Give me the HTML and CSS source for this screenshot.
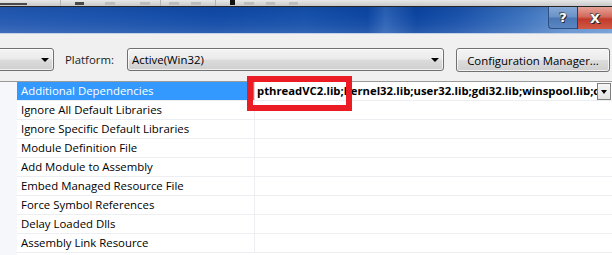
FILE: index.html
```html
<!DOCTYPE html>
<html>
<head>
<meta charset="utf-8">
<link rel="stylesheet" href="styles.css">
</head>
<body>
<div class="window">
  <div class="topstrip">
    <span class="tb-icon dark i0"></span>
    <span class="tb-sep s1"></span>
    <span class="tb-icon dark i1"></span>
    <span class="tb-icon faint i2"></span>
    <span class="tb-icon faint i3"></span>
    <span class="tb-sep s2"></span>
    <span class="tb-icon faint i4"></span>
    <span class="tb-icon faint i5"></span>
    <span class="tb-sep s3"></span>
    <span class="tb-icon black i6"></span>
    <span class="tb-icon faint i7"></span>
    <span class="tb-icon faint i8"></span>
    <span class="tb-icon faint i9"></span>
  </div>
  <div class="titlebar">
    <div class="caption-btns">
      <div class="cbtn help">?</div>
      <div class="cbtn close">X</div>
    </div>
  </div>
  <div class="toolbar">
    <div class="combo combo-config"><span class="arrow"></span></div>
    <span class="plat-label">Platform:</span>
    <div class="combo combo-platform"><span class="combo-text">Active(Win32)</span><span class="arrow"></span></div>
    <div class="btn">Configuration Manager...</div>
  </div>
  <div class="grid">
    <div class="gutter"></div>
    <div class="rows">
      <div class="row selected">
        <div class="name">Additional Dependencies</div>
        <div class="value editing">
          <span class="val-text">pthreadVC2.lib;kernel32.lib;user32.lib;gdi32.lib;winspool.lib;comdlg32.lib;advapi32.lib</span>
          <span class="ddbtn"><span class="arrow small"></span></span>
        </div>
      </div>
      <div class="row"><div class="name">Ignore All Default Libraries</div><div class="value"></div></div>
      <div class="row"><div class="name">Ignore Specific Default Libraries</div><div class="value"></div></div>
      <div class="row"><div class="name">Module Definition File</div><div class="value"></div></div>
      <div class="row"><div class="name">Add Module to Assembly</div><div class="value"></div></div>
      <div class="row"><div class="name">Embed Managed Resource File</div><div class="value"></div></div>
      <div class="row"><div class="name">Force Symbol References</div><div class="value"></div></div>
      <div class="row"><div class="name">Delay Loaded Dlls</div><div class="value"></div></div>
      <div class="row"><div class="name">Assembly Link Resource</div><div class="value"></div></div>
    </div>
  </div>
  <div class="highlight-box"></div>
</div>
</body>
</html>
```

FILE: styles.css
```css
* { box-sizing: border-box; }
html, body { margin: 0; padding: 0; }
body {
  width: 612px;
  height: 255px;
  overflow: hidden;
  background: #f0f0f0;
  font-family: "Open Sans", "Segoe UI", sans-serif;
  font-size: 11.4px;
  color: #000;
}
.window {
  position: relative;
  width: 612px;
  height: 255px;
  overflow: hidden;
  display: flex;
  flex-direction: column;
}

/* top strip (remnant of the IDE toolbar) */
.topstrip {
  flex: 0 0 7px;
  background: linear-gradient(#e8e8e8, #c9c9c9);
  border-bottom: 1px solid #262626;
  display: flex;
  align-items: flex-end;
  overflow: hidden;
}
.tb-sep {
  flex: 0 0 1px;
  height: 6px;
  background: #b4b4b4;
}
.tb-icon {
  flex: 0 0 auto;
  height: 3px;
  margin-bottom: 1px;
}
.tb-icon.dark { background: #4a4a4a; }
.tb-icon.faint { background: #bdbdbd; }
.tb-icon.black { background: #111; height: 5px; }
.i0 { width: 27px; height: 2px; background: #5a5a5a; margin-right: 33px; }
.s1 { margin-right: 14px; }
.i1 { width: 9px; margin-right: 21px; }
.i2 { width: 10px; margin-right: 25px; }
.i3 { width: 10px; margin-right: 10px; }
.s2 { margin-right: 8px; }
.i4 { width: 10px; margin-right: 12px; }
.i5 { width: 10px; margin-right: 14px; }
.s3 { margin-right: 14px; }
.i6 { width: 5px; margin-right: 9px; }
.i7 { width: 10px; margin-right: 12px; }
.i8 { width: 9px; margin-right: 14px; }
.i9 { width: 9px; }

/* title bar */
.titlebar {
  flex: 0 0 27px;
  display: flex;
  justify-content: flex-end;
  align-items: flex-start;
  border-bottom: 1px solid #c4d2e8;
  background:
    linear-gradient(180deg, rgba(0,0,0,0.06) 0%, rgba(0,0,0,0) 30%, rgba(255,255,255,0.05) 70%, rgba(255,255,255,0.12) 100%),
    linear-gradient(90deg, #2358b1 0%, #1a52ac 18%, #114aa6 35%, #1550aa 50%, #0d46a2 60%, #2b61b5 63%, #0b44a0 68%, #1a52ab 75%, #3b71bd 85%, #5b8bcb 92%, #6a98d2 100%);
}
.caption-btns {
  display: flex;
  height: 22px;
}
.cbtn {
  height: 22px;
  display: flex;
  align-items: center;
  justify-content: center;
  font-family: "DejaVu Sans", sans-serif;
  font-weight: bold;
  color: #fff;
  text-shadow: 0 0 1px #1b1b1b, 1px 1px 0 #2a2a2a, -1px -1px 0 #555;
}
.cbtn.help {
  width: 29px;
  font-size: 13px;
  border: 1px solid #2e4f82;
  border-top: none;
  border-right: none;
  border-radius: 0 0 0 4px;
  background: linear-gradient(#86a9d6 0%, #6c93c8 45%, #4b77b5 55%, #5a86c2 100%);
}
.cbtn.close {
  width: 35px;
  font-size: 13px;
  border-left: 1px solid #6b2a25;
  background: linear-gradient(#e6a397 0%, #d2685a 45%, #c13a2b 55%, #d05a45 100%);
}

/* toolbar with combos */
.toolbar {
  flex: 0 0 48px;
  display: flex;
  align-items: flex-start;
  padding-top: 14px;
  border-bottom: 1px solid #9a9a9a;
}
.combo, .btn {
  height: 23px;
  border: 1px solid #707070;
  border-radius: 3px;
  background: linear-gradient(#f4f4f4 0%, #ebebeb 48%, #dcdcdc 52%, #cfcfcf 100%);
  box-shadow: inset 0 0 0 1px rgba(255,255,255,0.7);
  display: flex;
  align-items: center;
}
.combo-config {
  width: 64px;
  margin-left: -10px;
  justify-content: flex-end;
  padding-right: 4px;
}
.arrow {
  width: 0;
  height: 0;
  border-left: 4px solid transparent;
  border-right: 4px solid transparent;
  border-top: 4px solid #000;
}
.arrow.small {
  border-left-width: 3.5px;
  border-right-width: 3.5px;
  border-top-width: 4px;
}
.plat-label {
  flex: 0 0 62px;
  margin-left: 11px;
  line-height: 23px;
  color: #1c1c1c;
}
.combo-platform {
  width: 317px;
  padding-left: 4px;
  padding-right: 4px;
  justify-content: space-between;
}
.combo-text { color: #000; }
.btn {
  width: 154px;
  height: 24px;
  margin-left: 12px;
  justify-content: center;
  color: #000;
}

/* property grid */
.grid {
  flex: 1;
  display: flex;
  background: #fff;
  min-height: 0;
}
.gutter {
  flex: 0 0 17px;
  background: #f5f7fb;
}
.rows {
  flex: 1;
  min-width: 0;
  display: flex;
  flex-direction: column;
}
.row {
  display: flex;
  flex: 0 0 19px;
  height: 19px;
  border-bottom: 1px solid #eceef2;
}
.name {
  flex: 0 0 237px;
  padding-left: 4px;
  line-height: 18px;
  white-space: nowrap;
  overflow: hidden;
}
.value {
  flex: 1;
  min-width: 0;
  border-left: 1px solid #eceef2;
  background: #fff;
}
.row.selected .name {
  background: #3399ff;
  color: #fff;
}
.value.editing {
  display: flex;
  align-items: flex-start;
  border-left-color: #d8d8d8;
}
.val-text {
  flex: 1;
  min-width: 0;
  overflow: hidden;
  white-space: nowrap;
  font-weight: bold;
  font-size: 11.3px;
  line-height: 18px;
  padding-left: 2px;
}
.ddbtn {
  flex: 0 0 14px;
  height: 17px;
  margin-top: 1px;
  margin-right: 1px;
  border: 1px solid #808080;
  background: linear-gradient(#f6f6f6, #e2e2e2);
  display: flex;
  align-items: center;
  justify-content: center;
}

/* red annotation box drawn over the screenshot */
.highlight-box {
  position: absolute;
  left: 247px;
  top: 76px;
  width: 105px;
  height: 35px;
  border: 6px solid #ec1c24;
}
```
